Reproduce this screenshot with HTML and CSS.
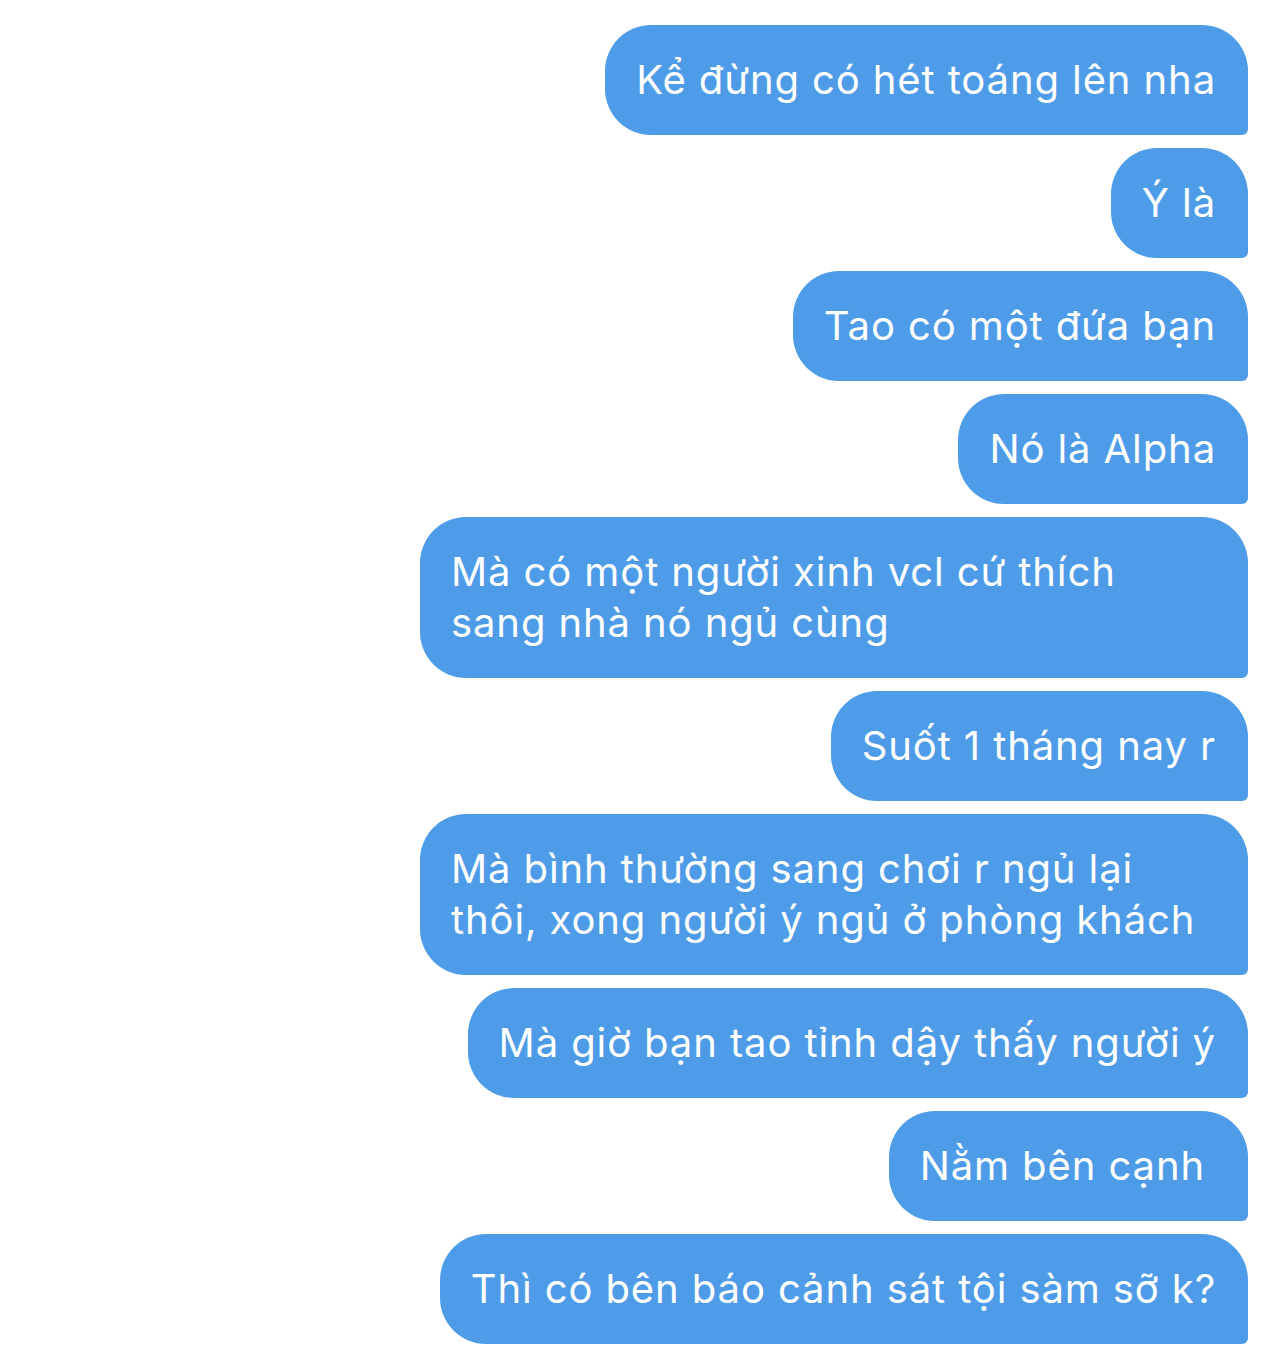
FILE: index.html
```html
<!DOCTYPE html>
<html lang="vi">
<head>
<meta charset="utf-8">
<link rel="stylesheet" href="styles.css">
</head>
<body>
<div class="chat">
  <div class="bubble">Kể đừng có hét toáng lên nha</div>
  <div class="bubble">Ý là</div>
  <div class="bubble">Tao có một đứa bạn</div>
  <div class="bubble">Nó là Alpha</div>
  <div class="bubble">Mà có một người xinh vcl cứ thích sang nhà nó ngủ cùng</div>
  <div class="bubble">Suốt 1 tháng nay r</div>
  <div class="bubble">Mà bình thường sang chơi r ngủ lại thôi, xong người ý ngủ ở phòng khách</div>
  <div class="bubble">Mà giờ bạn tao tỉnh dậy thấy người ý</div>
  <div class="bubble bubble-trail">Nằm bên cạnh</div>
  <div class="bubble">Thì có bên báo cảnh sát tội sàm sỡ k?</div>
</div>
</body>
</html>
```

FILE: styles.css
```css
html, body {
  margin: 0;
  padding: 0;
  background: #ffffff;
}
.chat {
  display: flex;
  flex-direction: column;
  align-items: flex-end;
  gap: 13px;
  padding: 25px 36px 0 0;
}
.bubble {
  box-sizing: border-box;
  max-width: 828px;
  background: #4e9ce8;
  color: #ffffff;
  font-family: Inter, "Noto Sans", sans-serif;
  font-size: 40px;
  letter-spacing: 0.9px;
  line-height: 51px;
  padding: 28.5px 32px 30.5px 31px;
  border-radius: 46px 46px 6px 46px;
}
.bubble-trail {
  padding-right: 43px;
}
```
